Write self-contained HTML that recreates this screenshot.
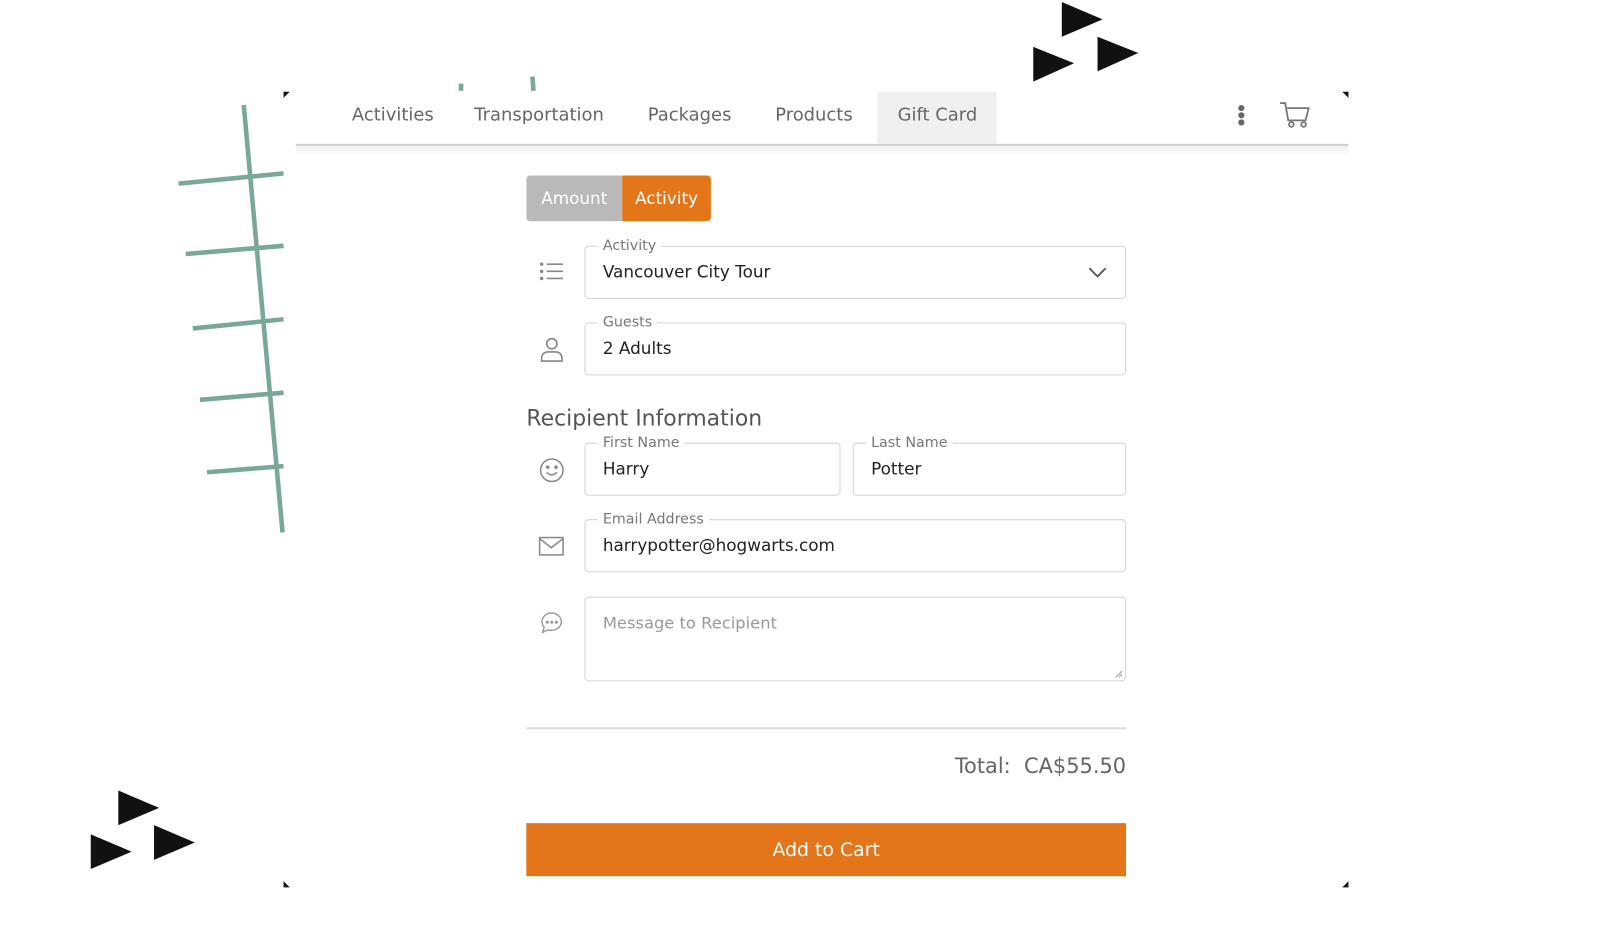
<!DOCTYPE html>
<html><head><meta charset="utf-8"><style>
*{margin:0;padding:0;box-sizing:border-box}
body{width:1600px;height:914px;background:#fff;position:relative;overflow:hidden;font-family:"DejaVu Sans","Liberation Sans",sans-serif}
#w{position:absolute;left:0;top:0;width:1570px;height:896px;transform:scale(1.02);transform-origin:0 0}
.a{position:absolute}
.nav{font-size:17.6px;color:#666;top:103px;white-space:nowrap}
.box{position:absolute;border:1px solid #d4d4d4;border-radius:4px}
.lab{position:absolute;top:-9px;left:12px;background:#fff;padding:0 5px;font-size:14px;color:#777;line-height:16px}
.val{position:absolute;left:17px;font-size:16.5px;color:#222;white-space:nowrap}
.ic{position:absolute}
</style></head><body><div id="w">
<svg class="a" style="left:0;top:0" width="1600" height="914">
 <g stroke="#7aa898" stroke-width="4.5" fill="none">
  <line x1="239" y1="103" x2="277" y2="522"/>
  <line x1="175" y1="180" x2="278" y2="170"/>
  <line x1="182" y1="249" x2="278" y2="241"/>
  <line x1="189" y1="322" x2="278" y2="313"/>
  <line x1="196" y1="392" x2="278" y2="385"/>
  <line x1="203" y1="463" x2="278" y2="457"/>
  <line x1="452" y1="82" x2="452" y2="89"/>
  <line x1="522" y1="75" x2="523" y2="89"/>
 </g>
 <g fill="#111">
  <polygon points="1041,2 1041,36 1081,19"/>
  <polygon points="1013,46 1013,80 1053,62"/>
  <polygon points="1076,36 1076,70 1116,52"/>
  <polygon points="116,775 116,809 156,792"/>
  <polygon points="89,818 89,852 129,835"/>
  <polygon points="151,809 151,843 191,826"/>
  <polygon points="278,90 284,90 278,96"/>
  <polygon points="1322,90 1316,90 1322,96"/>
  <polygon points="278,870 284,870 278,864"/>
  <polygon points="1322,870 1316,870 1322,864"/>
 </g>
</svg>
<div class="a" style="left:290px;top:141px;width:1032px;height:2px;background:#ccc"></div>
<div class="a" style="left:290px;top:143px;width:1032px;height:10px;background:linear-gradient(#eee,#fff)"></div>
<div class="a" style="left:860px;top:90px;width:117px;height:51px;background:#f0f0f0"></div>
<div class="a nav" style="left:345px">Activities</div>
<div class="a nav" style="left:465px">Transportation</div>
<div class="a nav" style="left:635px">Packages</div>
<div class="a nav" style="left:760px">Products</div>
<div class="a nav" style="left:880px">Gift Card</div>
<svg class="a" style="left:1210px;top:101px" width="14" height="26"><g fill="#666"><circle cx="7" cy="5" r="3"/><circle cx="7" cy="12" r="3"/><circle cx="7" cy="19" r="3"/></g></svg>
<svg class="a" style="left:1253px;top:98px" width="32" height="30" fill="none" stroke="#777" stroke-width="1.8"><path d="M2 3h5l3 17h17l3-12H9"/><circle cx="13" cy="24" r="2.3"/><circle cx="25" cy="24" r="2.3"/></svg>

<div class="a" style="left:516px;top:172px;width:181px;height:45px;border-radius:4px;overflow:hidden;display:flex;font-size:16.5px;color:#fff">
 <div style="width:94px;background:#b9b9b9;display:flex;align-items:center;justify-content:center">Amount</div>
 <div style="flex:1;background:#e4761a;display:flex;align-items:center;justify-content:center">Activity</div>
</div>

<svg class="ic" style="left:528px;top:256px" width="26" height="22" fill="#888" stroke="#888" stroke-width="1.6"><circle cx="3" cy="3" r="1.7" stroke="none"/><circle cx="3" cy="10" r="1.7" stroke="none"/><circle cx="3" cy="17" r="1.7" stroke="none"/><path d="M8 3h16M8 10h16M8 17h16"/></svg>
<div class="box" style="left:573px;top:241px;width:531px;height:52px"><span class="lab">Activity</span><span class="val" style="top:15px">Vancouver City Tour</span>
<svg class="a" style="right:17px;top:19px" width="20" height="12" fill="none" stroke="#555" stroke-width="1.8"><path d="M2 2l8 8 8-8"/></svg></div>

<svg class="ic" style="left:529px;top:330px" width="24" height="26" fill="none" stroke="#888" stroke-width="1.6"><circle cx="12" cy="7" r="5"/><path d="M2 24v-3a6 6 0 0 1 6-6h8a6 6 0 0 1 6 6v3z"/></svg>
<div class="box" style="left:573px;top:316px;width:531px;height:52px"><span class="lab">Guests</span><span class="val" style="top:15px">2 Adults</span></div>

<div class="a" style="left:516px;top:398px;font-size:21.5px;color:#555">Recipient Information</div>

<svg class="ic" style="left:528px;top:448px" width="26" height="26" fill="none" stroke="#888" stroke-width="1.5"><circle cx="13" cy="13" r="11"/><circle cx="9" cy="10" r="1" fill="#888"/><circle cx="17" cy="10" r="1" fill="#888"/><path d="M8 15q5 5 10 0"/></svg>
<div class="box" style="left:573px;top:434px;width:251px;height:52px"><span class="lab">First Name</span><span class="val" style="top:15px">Harry</span></div>
<div class="box" style="left:836px;top:434px;width:268px;height:52px"><span class="lab">Last Name</span><span class="val" style="top:15px">Potter</span></div>

<svg class="ic" style="left:528px;top:526px" width="26" height="20" fill="none" stroke="#888" stroke-width="1.5"><rect x="1" y="1" width="23" height="17"/><path d="M1 2l11.5 9L24 2"/></svg>
<div class="box" style="left:573px;top:509px;width:531px;height:52px"><span class="lab">Email Address</span><span class="val" style="top:15px">harrypotter@hogwarts.com</span></div>

<svg class="ic" style="left:528px;top:598px" width="26" height="26" fill="none" stroke="#999" stroke-width="1.4"><path d="M13 3a10 8.5 0 1 1-4 16.5L4 22l1.5-5A9 8.5 0 0 1 13 3z"/><circle cx="8.5" cy="12" r="0.8" fill="#999"/><circle cx="13" cy="12" r="0.8" fill="#999"/><circle cx="17.5" cy="12" r="0.8" fill="#999"/></svg>
<div class="box" style="left:573px;top:585px;width:531px;height:83px"><span class="val" style="top:15px;color:#999;font-size:16px">Message to Recipient</span>
<svg class="a" style="right:2px;bottom:2px" width="8" height="8" stroke="#999"><path d="M1 7l6-6M4 7l3-3"/></svg></div>

<div class="a" style="left:516px;top:713px;width:588px;height:2px;background:#ddd"></div>
<div class="a" style="right:466px;top:739px;font-size:20.5px;color:#666;white-space:nowrap">Total:&nbsp; CA$55.50</div>
<div class="a" style="left:516px;top:807px;width:588px;height:52px;background:#e3761a;color:#fff;font-size:18.5px;display:flex;align-items:center;justify-content:center">Add to Cart</div>
</div></body></html>
